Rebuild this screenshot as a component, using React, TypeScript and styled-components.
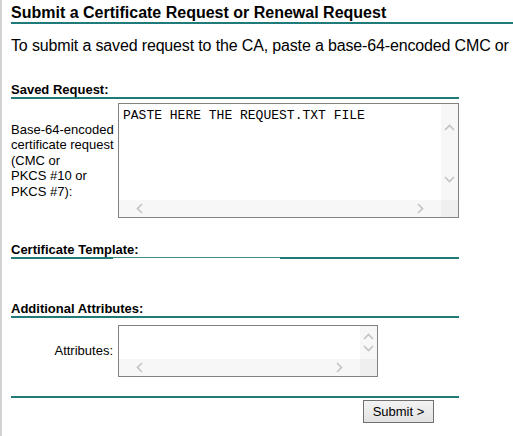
import React from 'react'
import styled, { createGlobalStyle, css } from 'styled-components'

const teal = '#1e7b79'

const GlobalStyle = createGlobalStyle`
  html, body {
    margin: 0;
    padding: 0;
    background: #fff;
    overflow: hidden;
  }
  body {
    font-family: "Liberation Sans", Arial, sans-serif;
    color: #000;
  }
`

const Page = styled.div`
  min-height: 436px;
  border-left: 2px solid #d2d2d2;
  padding-left: 9px;
  box-sizing: border-box;
`

const Title = styled.h1`
  margin: 0;
  padding-top: 4px;
  font-size: 16px;
  font-weight: bold;
  line-height: 18px;
  border-bottom: 2px solid ${teal};
  white-space: nowrap;
`

const Intro = styled.p`
  margin: 13px 0 0;
  font-size: 16px;
  line-height: 18px;
  letter-spacing: -0.15px;
  white-space: nowrap;
`

const Form = styled.form`
  width: 448px;
  margin: 0;
`

// the template rule is drawn in three pieces, like the original
const brokenRule = css`
  background:
    linear-gradient(${teal}, ${teal}) 0 100% / 102px 2px no-repeat,
    linear-gradient(#3f8e8c, #3f8e8c) 102px calc(100% - 1px) / 167px 1px no-repeat,
    linear-gradient(${teal}, ${teal}) 269px 100% / 179px 2px no-repeat;
  padding-bottom: 2px;
`

const SectionHead = styled.h2<{ $top: number; $broken?: boolean }>`
  margin: ${p => p.$top}px 0 0;
  font-size: 13px;
  font-weight: bold;
  line-height: 15px;
  ${p => (p.$broken ? brokenRule : css`border-bottom: 2px solid ${teal};`)}
`

const FieldRow = styled.div<{ $top: number }>`
  display: grid;
  grid-template-columns: 107px auto;
  align-items: center;
  margin-top: ${p => p.$top}px;
`

const FieldLabel = styled.label<{ $right?: boolean }>`
  font-size: 13px;
  line-height: 15.6px;
  white-space: nowrap;
  padding-right: ${p => (p.$right ? 5 : 0)}px;
  text-align: ${p => (p.$right ? 'right' : 'left')};
`

const Box = styled.div<{ $w: number; $h: number }>`
  display: grid;
  grid-template-columns: 1fr 17px;
  grid-template-rows: 1fr 17px;
  width: ${p => p.$w}px;
  height: ${p => p.$h}px;
  border: 1px solid #828282;
  box-sizing: border-box;
  background: #fff;
`

const Area = styled.textarea`
  border: none;
  outline: none;
  resize: none;
  overflow: hidden;
  margin: 0;
  padding: 4px 4px;
  font-family: "Liberation Mono", "Courier New", monospace;
  font-size: 13px;
  line-height: 15px;
  color: #000;
  background: transparent;
`

const VBar = styled.div<{ $top: number; $bottom: number }>`
  display: flex;
  flex-direction: column;
  justify-content: space-between;
  align-items: center;
  background: #f7f7f7;
  padding: ${p => p.$top}px 0 ${p => p.$bottom}px;
`

const HBar = styled.div`
  display: flex;
  justify-content: space-between;
  align-items: center;
  background: #f7f7f7;
  padding: 0 17px;
`

const Corner = styled.div`
  background: #efefef;
`

const Buttons = styled.div`
  display: flex;
  justify-content: flex-end;
  padding-right: 25px;
  margin-top: 2px;
`

const Submit = styled.button`
  width: 71px;
  height: 23px;
  padding: 0;
  font-family: "Liberation Sans", Arial, sans-serif;
  font-size: 13px;
  color: #000;
  border: 1px solid #707070;
  border-radius: 0;
  background: linear-gradient(#f3f3f3, #e2e2e2);
`

const Rule = styled.hr<{ $top: number }>`
  margin: ${p => p.$top}px 0 0;
  border: none;
  border-top: 2px solid ${teal};
`

type Dir = 'up' | 'down' | 'left' | 'right'

const points: Record<Dir, string> = {
  up: '1,6 5.5,1.5 10,6',
  down: '1,1 5.5,5.5 10,1',
  left: '6,1 1.5,5.5 6,10',
  right: '1,1 5.5,5.5 1,10',
}

const Chevron = ({ dir }: { dir: Dir }) => {
  const vertical = dir === 'up' || dir === 'down'
  return (
    <svg width={vertical ? 11 : 7} height={vertical ? 7 : 11} viewBox={vertical ? '0 0 11 7' : '0 0 7 11'}>
      <polyline points={points[dir]} fill="none" stroke="#c3c3c3" strokeWidth="1.6" />
    </svg>
  )
}

type BoxProps = { w: number; h: number; top: number; bottom: number; text?: string; id: string }

const TextBox = ({ w, h, top, bottom, text, id }: BoxProps) => (
  <Box $w={w} $h={h}>
    <Area id={id} defaultValue={text} spellCheck={false} />
    <VBar $top={top} $bottom={bottom}>
      <Chevron dir="up" />
      <Chevron dir="down" />
    </VBar>
    <HBar>
      <Chevron dir="left" />
      <Chevron dir="right" />
    </HBar>
    <Corner />
  </Box>
)

export default function App() {
  return (
    <>
      <GlobalStyle />
      <Page>
        <Title>Submit a Certificate Request or Renewal Request</Title>
        <Intro>To submit a saved request to the CA, paste a base-64-encoded CMC or</Intro>

        <Form onSubmit={e => e.preventDefault()}>
          <SectionHead $top={27}>Saved Request:</SectionHead>
          <FieldRow $top={4}>
            <FieldLabel htmlFor="req">
              Base-64-encoded<br />
              certificate request<br />
              (CMC or<br />
              PKCS #10 or<br />
              PKCS #7):
            </FieldLabel>
            <TextBox id="req" w={341} h={115} top={20} bottom={17} text="PASTE HERE THE REQUEST.TXT FILE" />
          </FieldRow>

          <SectionHead $top={24} $broken>Certificate Template:</SectionHead>

          <SectionHead $top={42}>Additional Attributes:</SectionHead>
          <FieldRow $top={7}>
            <FieldLabel htmlFor="attr" $right>Attributes:</FieldLabel>
            <TextBox id="attr" w={260} h={52} top={7} bottom={7} />
          </FieldRow>

          <Rule $top={19} />
          <Buttons>
            <Submit type="submit">Submit &gt;</Submit>
          </Buttons>
        </Form>
      </Page>
    </>
  )
}
